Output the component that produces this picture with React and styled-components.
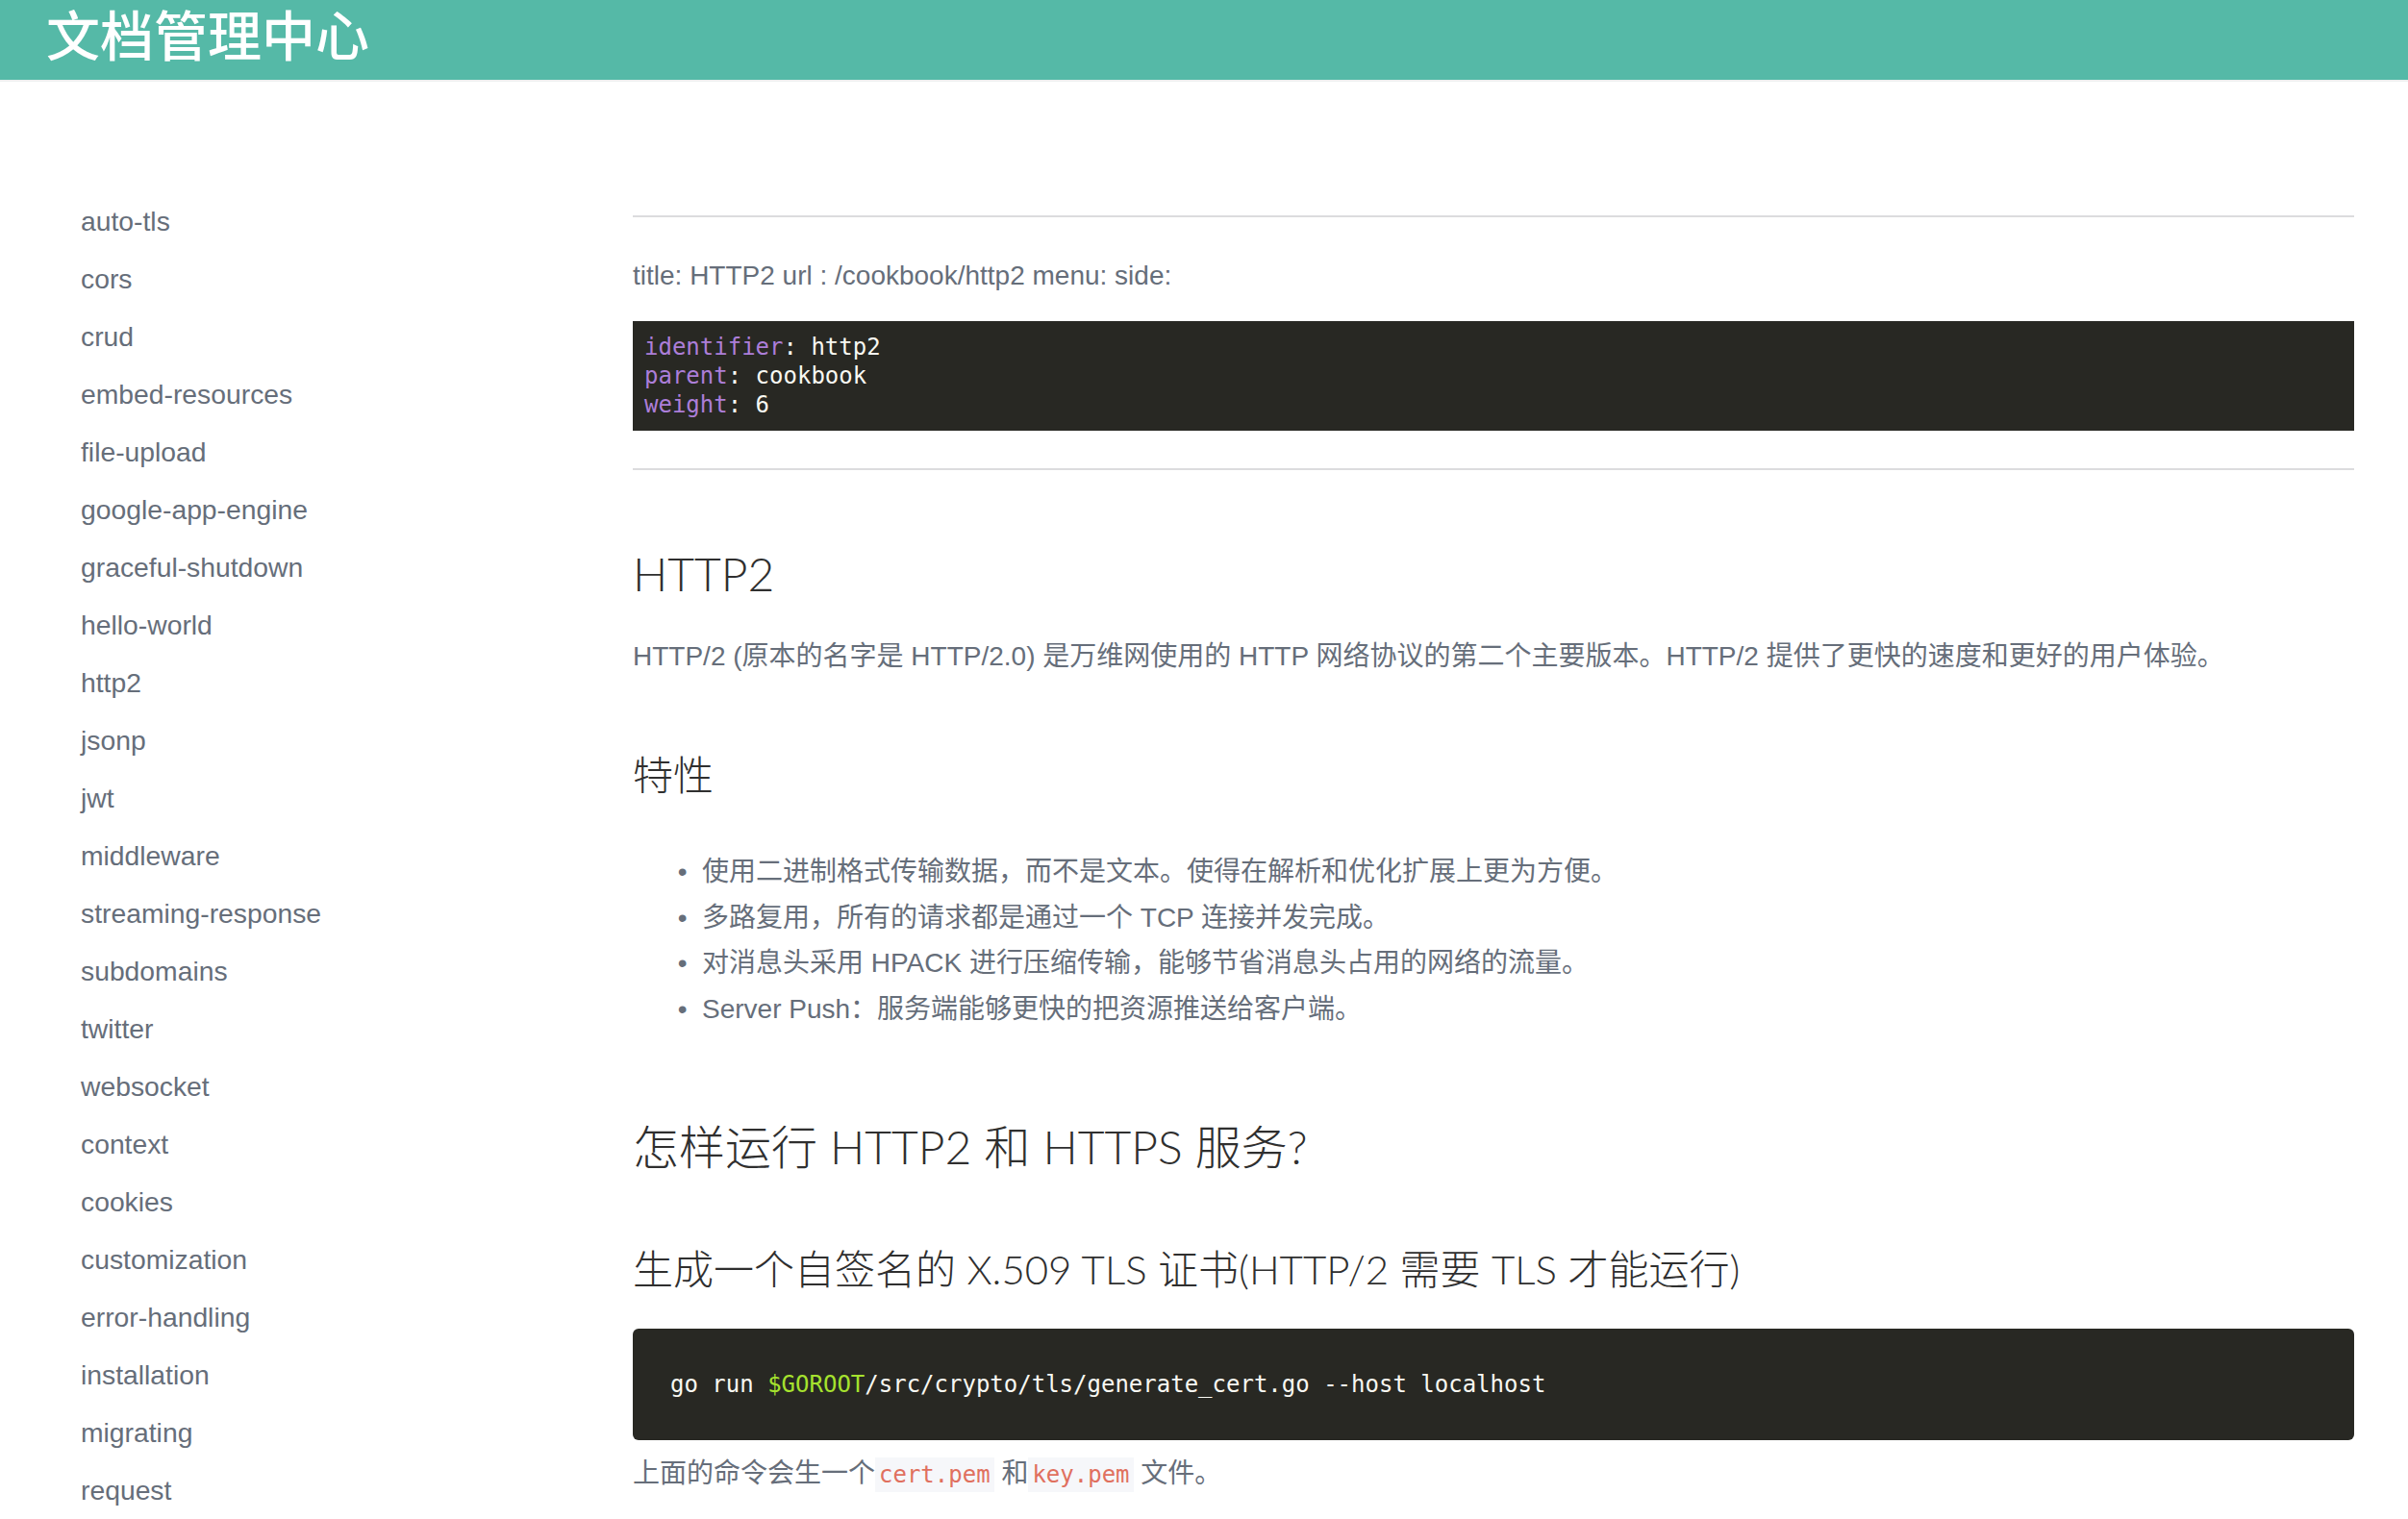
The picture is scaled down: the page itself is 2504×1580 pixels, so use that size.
import React from "react";
import styled, { createGlobalStyle } from "styled-components";

const sans = `"Liberation Sans", "Noto Sans CJK SC", sans-serif`;
const light = `"Lato", "Noto Sans CJK SC", sans-serif`;
const mono = `"DejaVu Sans Mono", "Liberation Mono", monospace`;

const menu = [
    "auto-tls", "cors", "crud", "embed-resources", "file-upload",
    "google-app-engine", "graceful-shutdown", "hello-world", "http2",
    "jsonp", "jwt", "middleware", "streaming-response", "subdomains",
    "twitter", "websocket", "context", "cookies", "customization",
    "error-handling", "installation", "migrating", "request",
];

const features = [
    "使用二进制格式传输数据，而不是文本。使得在解析和优化扩展上更为方便。",
    "多路复用，所有的请求都是通过一个 TCP 连接并发完成。",
    "对消息头采用 HPACK 进行压缩传输，能够节省消息头占用的网络的流量。",
    "Server Push：服务端能够更快的把资源推送给客户端。",
];

const App = () => {
    return (
        <>
            <GlobalStyle />
            <Header>
                <Brand>文档管理中心</Brand>
            </Header>
            <Layout>
                <Sidebar>
                    {menu.map((item) => (
                        <NavItem key={item}>{item}</NavItem>
                    ))}
                </Sidebar>
                <Content>
                    <Rule />
                    <Text $top={40}>title: HTTP2 url : /cookbook/http2 menu: side:</Text>
                    <FrontMatter>
                        <Key>identifier</Key>: http2{"\n"}
                        <Key>parent</Key>: cookbook{"\n"}
                        <Key>weight</Key>: 6
                    </FrontMatter>
                    <Rule $top={39} />
                    <Heading $size={48} $top={78}>HTTP2</Heading>
                    <Text $top={35}>
                        HTTP/2 (原本的名字是 HTTP/2.0) 是万维网使用的 HTTP 网络协议的第二个主要版本。HTTP/2 提供了更快的速度和更好的用户体验。
                    </Text>
                    <Heading $size={42} $top={76}>特性</Heading>
                    <List>
                        {features.map((f) => (
                            <li key={f}>{f}</li>
                        ))}
                    </List>
                    <Heading $size={48} $top={89}>怎样运行 HTTP2 和 HTTPS 服务?</Heading>
                    <Heading $size={42} $top={71}>生成一个自签名的 X.509 TLS 证书(HTTP/2 需要 TLS 才能运行)</Heading>
                    <CodeBlock>
                        go run <Var>$GOROOT</Var>/src/crypto/tls/generate_cert.go --host localhost
                    </CodeBlock>
                    <Text $top={14}>
                        上面的命令会生一个<InlineCode>cert.pem</InlineCode> 和<InlineCode>key.pem</InlineCode> 文件。
                    </Text>
                </Content>
            </Layout>
        </>
    );
};

const GlobalStyle = createGlobalStyle`
    *, *::before, *::after {
        box-sizing: border-box;
    }

    body {
        margin: 0;
        background: #fff;
        font-family: ${sans};
    }
`;

const Header = styled.header`
    height: 85px;
    background: #55b9a7;
    border-bottom: 2px solid #eef0f0;
    padding: 0 0 0 48px;
`;

const Brand = styled.h1`
    margin: 0;
    font-family: "Noto Sans CJK SC", sans-serif;
    font-size: 56px;
    font-weight: 500;
    line-height: 67px;
    color: #fff;
`;

const Layout = styled.div`
    display: flex;
    align-items: flex-start;
`;

const Sidebar = styled.nav`
    flex: 0 0 658px;
    padding: 115px 0 0 84px;
    display: flex;
    flex-direction: column;
`;

const NavItem = styled.a`
    font-size: 28.3px;
    line-height: 60px;
    color: #666e7a;
    text-decoration: none;
`;

const Content = styled.main`
    flex: 1;
    min-width: 0;
    padding: 139px 56px 0 0;
`;

const Rule = styled.hr`
    margin: ${(p) => p.$top || 0}px 0 0;
    border: 0;
    height: 2px;
    background: #dcdcde;
`;

const Text = styled.p`
    margin: ${(p) => p.$top || 0}px 0 0;
    font-size: 28px;
    line-height: 42px;
    color: #666e7a;
`;

const Heading = styled.h2`
    margin: ${(p) => p.$top || 0}px 0 0;
    font-family: ${light};
    font-size: ${(p) => p.$size}px;
    line-height: ${(p) => Math.round(p.$size * 1.25)}px;
    font-weight: 300;
    color: #2f2f2f;
`;

const FrontMatter = styled.pre`
    margin: 26px 0 0;
    padding: 12px;
    background: #282823;
    color: #f8f8f2;
    font-family: ${mono};
    font-size: 24px;
    line-height: 30px;
    white-space: pre;
`;

const Key = styled.span`
    color: #ac7ed8;
`;

const List = styled.ul`
    margin: 50px 0 0;
    padding-left: 72px;
    font-size: 28px;
    line-height: 47.7px;
    color: #666e7a;

    li {
        height: 47.7px;
    }

    li::marker {
        content: "\\2022\\00a0\\00a0";
    }
`;

const CodeBlock = styled.pre`
    margin: 35px 0 0;
    padding: 43px 39px;
    border-radius: 6px;
    background: #282823;
    color: #f8f8f2;
    font-family: ${mono};
    font-size: 24px;
    line-height: 30px;
    white-space: pre;
`;

const Var = styled.span`
    color: #a6e22e;
`;

const InlineCode = styled.code`
    padding: 4px 4px;
    background: #f6f7fa;
    color: #e0705f;
    font-family: ${mono};
    font-size: 24px;
`;

export default App;
